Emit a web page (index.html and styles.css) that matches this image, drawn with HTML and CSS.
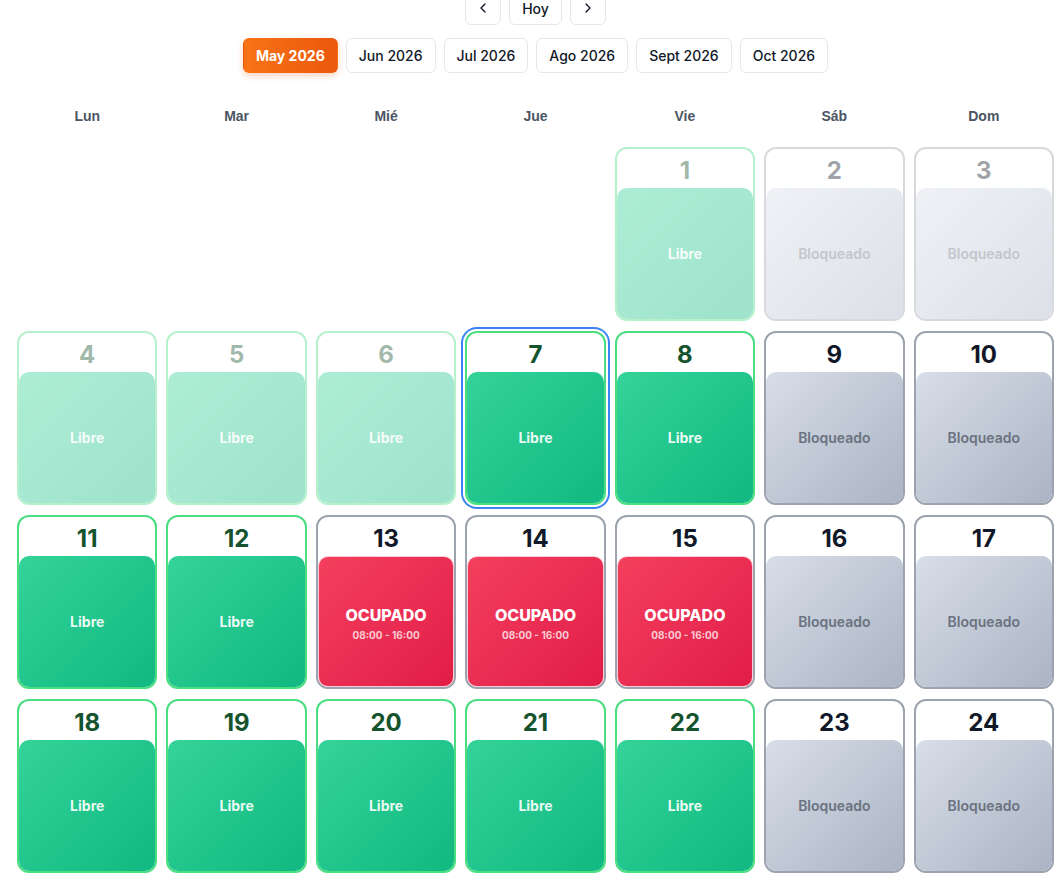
FILE: index.html
```html
<!DOCTYPE html>
<html lang="es">
<head>
    <meta charset="UTF-8">
    <meta name="viewport" content="width=device-width, initial-scale=1.0">
    <title>Calendario</title>
    <link rel="stylesheet" href="styles.css">
</head>
<body>
    <div class="page">
        <div class="nav">
            <button class="nav-btn icon-btn" aria-label="Anterior">
                <svg width="16" height="16" viewBox="0 0 24 24" fill="none" stroke="currentColor" stroke-width="2" stroke-linecap="round" stroke-linejoin="round"><path d="m15 18-6-6 6-6"/></svg>
            </button>
            <button class="nav-btn">Hoy</button>
            <button class="nav-btn icon-btn" aria-label="Siguiente">
                <svg width="16" height="16" viewBox="0 0 24 24" fill="none" stroke="currentColor" stroke-width="2" stroke-linecap="round" stroke-linejoin="round"><path d="m9 18 6-6-6-6"/></svg>
            </button>
        </div>

        <div class="months">
            <button class="month active">May 2026</button>
            <button class="month">Jun 2026</button>
            <button class="month">Jul 2026</button>
            <button class="month">Ago 2026</button>
            <button class="month">Sept 2026</button>
            <button class="month">Oct 2026</button>
        </div>

        <div class="weekdays">
            <div>Lun</div>
            <div>Mar</div>
            <div>Mié</div>
            <div>Jue</div>
            <div>Vie</div>
            <div>Sáb</div>
            <div>Dom</div>
        </div>

        <div class="calendar" id="calendar"></div>
    </div>

    <script>
        // status per day: f = libre, b = bloqueado, o = ocupado
        const days = {
            1: 'f', 2: 'b', 3: 'b',
            4: 'f', 5: 'f', 6: 'f', 7: 'f', 8: 'f', 9: 'b', 10: 'b',
            11: 'f', 12: 'f', 13: 'o', 14: 'o', 15: 'o', 16: 'b', 17: 'b',
            18: 'f', 19: 'f', 20: 'f', 21: 'f', 22: 'f', 23: 'b', 24: 'b'
        };
        const today = 7;
        const offset = 4; // May 1st 2026 is a Friday

        const calendar = document.getElementById('calendar');

        for (let i = 0; i < offset; i++) {
            calendar.appendChild(document.createElement('div'));
        }

        Object.keys(days).forEach(key => {
            const day = Number(key);
            const status = days[key];
            const cell = document.createElement('div');
            cell.className = 'day';
            if (status === 'f') cell.classList.add('free');
            if (status === 'b') cell.classList.add('blocked');
            if (status === 'o') cell.classList.add('busy');
            if (day < today) cell.classList.add('past');
            if (day === today) cell.classList.add('selected');

            let slot = '';
            if (status === 'f') slot = '<span class="label">Libre</span>';
            if (status === 'b') slot = '<span class="label">Bloqueado</span>';
            if (status === 'o') slot = '<span class="label-big">OCUPADO</span><span class="hours">08:00 - 16:00</span>';

            cell.innerHTML = `
                <div class="day-num">${day}</div>
                <div class="slot">${slot}</div>
            `;
            calendar.appendChild(cell);
        });
    </script>
</body>
</html>
```

FILE: styles.css
```css
:root {
    --text: #111827;
    --muted: #4b5563;
    --line: #e5e7eb;
    --green-border: #4ade80;
    --green-text: #14532d;
    --gray-border: #9ca3af;
    --blue: #3b82f6;
}

html, body {
    margin: 0;
    padding: 0;
}

body {
    font-family: Inter, "Noto Sans", sans-serif;
    background-color: #fff;
    color: var(--text);
}

.page {
    padding: 0 4px 0 17px;
}

button {
    font-family: inherit;
    color: var(--text);
    background-color: #fff;
    border: 1px solid var(--line);
    border-radius: 6px;
    cursor: pointer;
}

.nav {
    display: flex;
    justify-content: center;
    gap: 8px;
    margin-top: -9px;
}

.nav-btn {
    height: 34px;
    padding: 0 12px;
    font-size: 14px;
    font-weight: 500;
    display: flex;
    align-items: center;
}

.icon-btn {
    padding: 0 9px;
}

.months {
    display: flex;
    justify-content: center;
    gap: 8px;
    margin-top: 13px;
}

.month {
    height: 35px;
    padding: 0 12px;
    font-size: 14px;
    font-weight: 500;
}

.month.active {
    background: linear-gradient(90deg, #f97316, #ea580c);
    border-color: transparent;
    color: #fff;
    font-weight: 700;
    box-shadow: 0 3px 6px rgba(234, 88, 12, 0.25);
}

.weekdays,
.calendar {
    display: grid;
    grid-template-columns: repeat(7, 1fr);
    column-gap: 9px;
}

.weekdays {
    margin-top: 33px;
    line-height: 20px;
    text-align: center;
    font-family: "Liberation Sans", Arial, sans-serif;
    font-size: 14px;
    font-weight: 700;
    color: var(--muted);
}

.calendar {
    margin-top: 21px;
    row-gap: 10px;
}

.day {
    height: 174px;
    box-sizing: border-box;
    border: 2px solid var(--gray-border);
    border-radius: 12px;
    background-color: #fff;
    display: flex;
    flex-direction: column;
}

.day-num {
    height: 39px;
    box-sizing: border-box;
    padding-top: 5px;
    line-height: 34px;
    text-align: center;
    font-size: 24px;
    font-weight: 700;
}

.slot {
    flex: 1;
    border-radius: 10px;
    display: flex;
    flex-direction: column;
    align-items: center;
    justify-content: center;
}

.label {
    font-size: 14px;
    font-weight: 700;
}

.free {
    border-color: var(--green-border);
}

.free .day-num {
    color: var(--green-text);
}

.free .slot {
    background: linear-gradient(135deg, #34d399, #10b981);
    color: rgba(255, 255, 255, 0.92);
}

.blocked .slot {
    background: linear-gradient(135deg, #d8dee8, #aab4c4);
    color: #6b7280;
}

.blocked .label {
    font-weight: 600;
}

.busy .slot {
    background: linear-gradient(135deg, #f43f5e, #e11d48);
    border: 1px solid #fecdd3;
    color: #fff;
    padding-top: 2px;
}

.label-big {
    font-size: 16px;
    font-weight: 800;
    line-height: 20px;
}

.hours {
    margin-top: 4px;
    font-size: 10px;
    line-height: 12px;
    font-weight: 700;
    color: rgba(255, 255, 255, 0.75);
}

.past {
    opacity: 0.4;
}

.selected {
    box-shadow: 0 0 0 2px #fff, 0 0 0 4px var(--blue);
}
```
